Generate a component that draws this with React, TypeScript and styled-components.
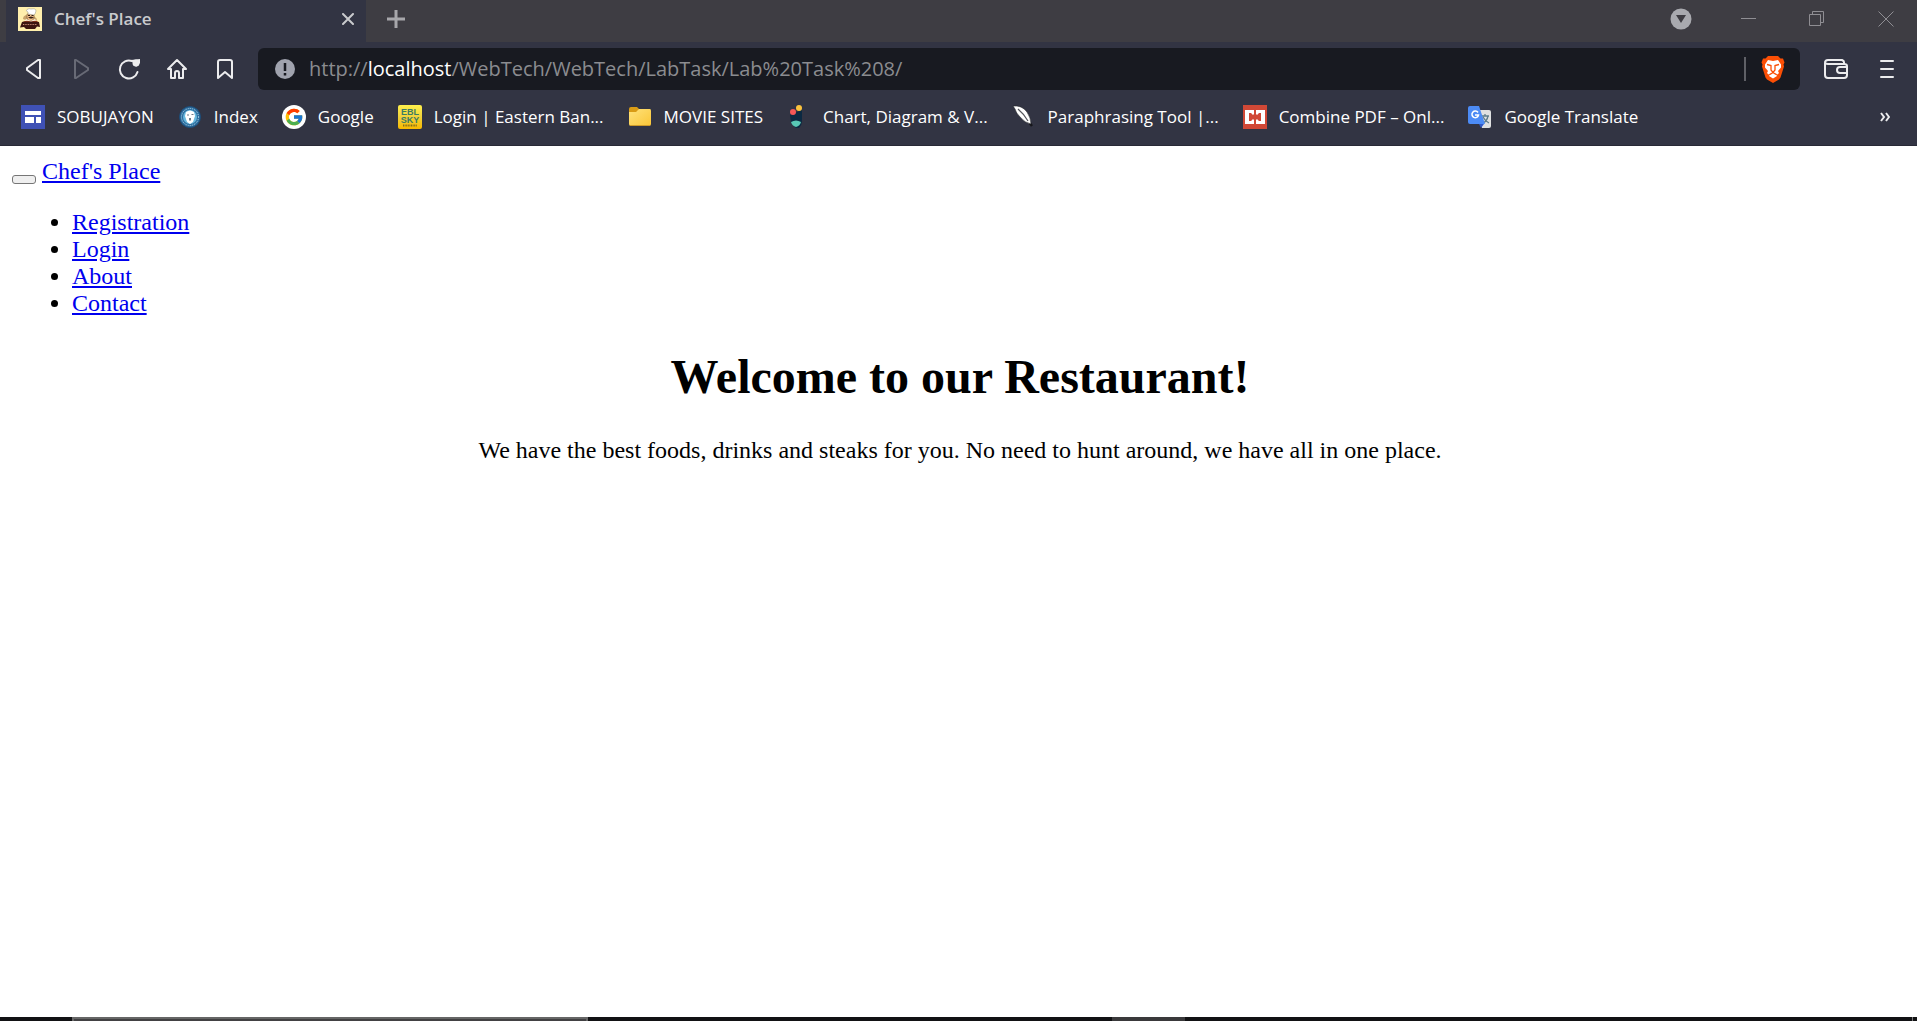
import React, { useState } from "react";
import styled, { createGlobalStyle } from "styled-components";
import { FcGoogle } from "react-icons/fc";

const ui = `"Open Sans", "Noto Sans", sans-serif`;

const GlobalStyle = createGlobalStyle`
  *, *::before, *::after { box-sizing: border-box; }
  body { margin: 0; background: #fff; }
`;

const Window = styled.div`
  display: flex;
  flex-direction: column;
  min-height: 100vh;
`;

const Chrome = styled.header`
  background: #323443;
  border-bottom: 1px solid #282936;
  font-family: ${ui};
  color: #fff;
`;

const TabStrip = styled.div`
  display: flex;
  height: 42px;
  padding-left: 6px;
  background: #3e3d43;
`;

const Tab = styled.div`
  display: flex;
  align-items: center;
  gap: 12px;
  width: 360px;
  padding: 0 9px 4px 12px;
  background: #323443;
  color: #c9cacd;
`;

const TabTitle = styled.span`
  flex: 1;
  font-weight: 600;
  font-size: 17px;
  line-height: 24px;
`;

const IconButton = styled.button<{ $w: number; $h?: number }>`
  display: flex;
  align-items: center;
  justify-content: center;
  flex: none;
  width: ${(p) => p.$w}px;
  height: ${(p) => p.$h ?? 36}px;
  padding: 0;
  border: 0;
  background: none;
  color: #ececee;

  &:disabled { color: #686a76; }
`;

const CloseTab = styled(IconButton)`
  color: #c9cacd;
`;

const NewTab = styled(IconButton)`
  margin-left: 6px;
  color: #a7a7ab;
`;

const WindowControls = styled.div`
  display: flex;
  margin-left: auto;

  & > button { color: #8f8e93; }
  & > button:last-child { padding-left: 3px; }
`;

const Toolbar = styled.div`
  display: flex;
  align-items: center;
  height: 54px;
  padding: 0 3px 0 9px;
`;

const AddressBar = styled.form`
  display: flex;
  align-items: center;
  flex: 1;
  min-width: 0;
  height: 42px;
  margin: 0 12px 0 9px;
  padding: 0 15px 0 17px;
  border-radius: 6px;
  background: #181a21;
  font-size: 20px;
  line-height: 28px;
  color: #8b8c90;
`;

const Origin = styled.label`
  margin-left: 14px;
`;

const Host = styled.span`
  color: #fff;
`;

const PathInput = styled.input`
  flex: 1;
  min-width: 0;
  padding: 0;
  border: 0;
  outline: 0;
  background: none;
  font: inherit;
  color: inherit;
`;

const Divider = styled.span`
  width: 2px;
  height: 24px;
  margin-right: 15px;
  background: #5f6066;
`;

const BookmarkBar = styled.nav`
  display: flex;
  align-items: center;
  gap: 24px;
  height: 49px;
  padding: 0 5px 8px 21px;
`;

const Bookmark = styled.a`
  display: flex;
  align-items: center;
  gap: 12px;
  font-size: 17px;
  line-height: 24px;
  white-space: nowrap;
  color: #fff;
  text-decoration: none;
`;

const MoreBookmarks = styled(IconButton)`
  margin-left: auto;
`;

const Page = styled.main`
  flex: 1;
  padding: 12px 9px 12px 12px;
  font-family: "Liberation Serif", serif;
  font-size: 24px;
  line-height: 27px;
  color: #000;
`;

const SiteNav = styled.nav`
  a { color: #0000ee; }
`;

const Brand = styled.div`
  display: flex;
  align-items: flex-end;
  gap: 6px;
`;

const Toggler = styled.button`
  width: 24px;
  height: 9px;
  margin-bottom: 1px;
  padding: 0;
  border: 1px solid #767676;
  border-radius: 3px;
  background: #efefef;
`;

const Menu = styled.ul`
  margin: 24px 0 0;
  padding-left: 60px;
`;

const Hero = styled.section`
  text-align: center;
`;

const Title = styled.h1`
  margin: 32px 0;
  font-size: 48px;
  line-height: 56px;
`;

const Lead = styled.p`
  margin: 0;
`;

const Taskbar = styled.footer`
  display: flex;
  height: 4px;
  padding: 0 4px 0 72px;
  background: #121214;
`;

const TaskSearch = styled.div`
  width: 516px;
  border: 2px solid #666;
  border-bottom: 0;
  background: #424143;
`;

const ActiveTask = styled.div`
  width: 73px;
  margin-left: 524px;
  background: #3a393b;
`;

const DesktopEdge = styled.div`
  width: 1px;
  margin-left: auto;
  background: #777;
`;

const Svg = ({ size = 24, children }: { size?: number; children: React.ReactNode }) => (
  <svg width={size} height={size} viewBox={`0 0 ${size} ${size}`} fill="none" aria-hidden="true">
    {children}
  </svg>
);

const line = { stroke: "currentColor", strokeWidth: 2, strokeLinejoin: "round", strokeLinecap: "round" } as const;

const ChefIcon = () => (
  <Svg>
    <path fill="#ffefad" d="M0 0h24v24H0z" />
    <path fill="#c9a46c" d="M5 12q0-3 3-4l2 1v5zM16 9l3 3-1 3-3-2z" />
    <path fill="#f1c08c" stroke="#63401f" strokeWidth=".5" d="M9 7h7v4l-2 3h-3l-2-3z" />
    <path fill="#fff" stroke="#a5a18e" strokeWidth=".6" d="M10 7V5Q7 4 9 2.500q2-1.500 4-.5 5-1 5 2l-1 3-1 1z" />
    <path fill="#352014" d="M10 8h2v1h-2zM13.500 8h2v1h-2zM10 10.500l3-1 3 1-2 1h-2z" />
    <path fill="#fff8e4" d="m8 12 5 2 4-2 2 3H6z" />
    <path fill="#b84a22" d="M5 15q3-2 6-1l2 1 2-1q4-1 5 1v1H4z" />
    <path fill="#3c1512" d="m4 15 2-.5h12l3 .5 1 5-3-.5L17 22H8l-2-2-4 .5z" />
    <path stroke="#c98d78" strokeWidth="1" strokeDasharray="1 .7" d="M5 17.500h14" />
  </Svg>
);

const SitesIcon = () => (
  <Svg>
    <path fill="#3f51b5" d="M0 0h24v24H0z" />
    <path fill="#fff" d="M4 6h16v4H4zM4 12h9v6H4zM15 12h5v6h-5z" />
  </Svg>
);

const IndexIcon = () => (
  <Svg>
    <circle cx="12" cy="12" r="10.500" fill="#2d6e9f" stroke="#1c4c78" />
    <circle cx="12" cy="12" r="8.500" stroke="#b5d8ea" strokeDasharray="1 1" />
    <circle cx="12" cy="12" r="7" fill="#68b8dd" />
    <path fill="#fff" d="M8 7q4-3 8 0l1 4-2 6-3 2-3-2-2-6z" />
    <path fill="#6f7b86" d="M9 9.500h2v1H9zM13.500 9h2v1h-2zM11 13h2v2.500h-2z" />
  </Svg>
);

const GoogleIcon = () => (
  <Svg>
    <circle cx="12" cy="12" r="12" fill="#fff" />
    <FcGoogle x="2" y="2" size={20} />
  </Svg>
);

const BankIcon = () => (
  <Svg>
    <defs>
      <linearGradient id="gold" x2="0" y2="1">
        <stop stopColor="#fff04c" />
        <stop offset=".5" stopColor="#f0d13b" />
        <stop offset="1" stopColor="#f8b900" />
      </linearGradient>
    </defs>
    <rect width="24" height="24" rx="2" fill="url(#gold)" />
    <g fill="#3c7b63" fontFamily="Liberation Sans, sans-serif" fontWeight="700" fontSize="9" textAnchor="middle">
      <text x="12" y="10">EBL</text>
      <text x="12" y="18">SKY</text>
    </g>
    <path stroke="#876e18" strokeWidth="2" strokeDasharray="1 .6" d="M5 20.500h14" />
  </Svg>
);

const FolderIcon = () => (
  <Svg>
    <defs>
      <linearGradient id="folder" x2="1" y2="1">
        <stop stopColor="#ffe27c" />
        <stop offset="1" stopColor="#fac637" />
      </linearGradient>
    </defs>
    <path fill="#d99b15" d="M1 4q0-2 2-2h6l2 2v4H1z" />
    <path fill="url(#folder)" d="M1 7h7l3-3h11q1 0 1 2v13q0 2-2 2H3q-2 0-2-2z" />
    <path stroke="#ce9a29" d="M2 20.500h20" />
  </Svg>
);

const ChartIcon = () => (
  <Svg>
    <path fill="#0b2942" d="M3 10 15 5v11q0 4-3 7H9q-4-3-5-6z" />
    <circle cx="12" cy="3" r="3" fill="#fcc33d" />
    <circle cx="6" cy="7" r="3" fill="#f25757" />
    <path fill="#59c8b5" d="M4 17q5-3 10 0-1 4-5 5-4-1-5-5z" />
  </Svg>
);

const QuillIcon = () => (
  <Svg>
    <path stroke="#16171b" strokeWidth="2.500" d="m16 16 4 5" />
    <path fill="#fff" stroke="#202126" strokeWidth=".6" d="M1 1q9-1 14 6 4 6 4 12-6-1-11-7-4-4-5-8z" />
    <path stroke="#55565c" strokeWidth="1.200" d="M6 4q6 5 10 12" />
  </Svg>
);

const PdfIcon = () => (
  <Svg>
    <path fill="#d14836" d="M0 0h24v24H0z" />
    <path fill="#fff" d="M2 5h9v4l-1 1v4l1 1v4H2zM13 5h9v14h-9v-4l1-1v-4l-1-1z" />
    <path fill="#d14836" d="M6 8h2l3 3h2l3-3h2v8h-2l-3-3h-2l-3 3H6z" />
  </Svg>
);

const TranslateIcon = () => (
  <Svg>
    <path fill="#dfe0e1" d="M10 5h11q2 0 2 2v14q0 2-2 2h-7z" />
    <path fill="#3158c6" d="m11 19 5 0-3 4z" />
    <path stroke="#5d7c8b" strokeWidth="1.300" d="M14 11h7M17 9v2M20 11q-1 5-5 7M15 12q2 4 6 6" />
    <path fill="#4c8bf5" d="M2 1h9l6 18H2q-2 0-2-2V3q0-2 2-2z" />
    <path stroke="#fff" strokeWidth="1.500" d="M10 7.500A3.300 3.300 0 1 0 10.500 10H7" />
  </Svg>
);

const LionIcon = () => (
  <svg width="24" height="28" viewBox="0 0 24 28" aria-hidden="true">
    <path fill="#fb4f05" d="M7 1h10l2.500 2.500L22 3.500l1.500 4-1 2 .5 2-3.500 11-1.500 2L12 28l-6-3.500-1.500-2L1 11.500l.5-2-1-2 1.500-4h2.500z" />
    <path fill="#fff" d="M7 5l5 1 5-1 3 4.500v3l-3 3.500 1 2-1.500 1.500L14 18l2 3-4 2.500L8 21l2-3-2.500 1.500L6 18l1-2-3-3.500v-3z" />
    <path fill="none" stroke="#fb4f05" strokeWidth="1.300" d="M6 9.500l4 1V15l2 2.500 2-2.500v-4.500l4-1M9 19.500l3-2 3 2" />
  </svg>
);

const bookmarks = [
  { label: "SOBUJAYON", Icon: SitesIcon },
  { label: "Index", Icon: IndexIcon },
  { label: "Google", Icon: GoogleIcon },
  { label: "Login | Eastern Ban...", Icon: BankIcon },
  { label: "MOVIE SITES", Icon: FolderIcon },
  { label: "Chart, Diagram & V...", Icon: ChartIcon },
  { label: "Paraphrasing Tool |...", Icon: QuillIcon },
  { label: "Combine PDF – Onl...", Icon: PdfIcon },
  { label: "Google Translate", Icon: TranslateIcon },
];

const menu = ["Registration", "Login", "About", "Contact"];

export default function App() {
  const [path, setPath] = useState("/WebTech/WebTech/LabTask/Lab%20Task%208/");

  return (
    <Window>
      <GlobalStyle />
      <Chrome>
        <TabStrip>
          <Tab>
            <ChefIcon />
            <TabTitle>Chef's Place</TabTitle>
            <CloseTab $w={18} $h={24} aria-label="Close tab">
              <svg width="12" height="12" fill="none"><path {...line} d="m1 1 10 10M11 1 1 11" /></svg>
            </CloseTab>
          </Tab>
          <NewTab $w={48} $h={38} aria-label="New tab">
            <svg width="18" height="18" fill="none"><path {...line} strokeWidth={3} strokeLinecap="butt" d="M9 0v18M0 9h18" /></svg>
          </NewTab>
          <WindowControls>
            <IconButton $w={68} $h={38} aria-label="Search tabs">
              <svg width="22" height="22"><circle cx="11" cy="11" r="10.500" fill="#a9aaaf" /><path fill="#3e3d43" d="M6 7h10l-5 8z" /></svg>
            </IconButton>
            <IconButton $w={68} $h={38} aria-label="Minimize">
              <svg width="16" height="16"><path stroke="currentColor" d="M0 7.500h15" /></svg>
            </IconButton>
            <IconButton $w={68} $h={38} aria-label="Restore">
              <svg width="16" height="16" fill="none"><path stroke="currentColor" d="M.5 3.500h11v11H.5zM3.500 3V.5h11v11H12" /></svg>
            </IconButton>
            <IconButton $w={66} $h={38} aria-label="Close">
              <svg width="16" height="16"><path stroke="currentColor" d="m.5.5 15 15M15.500.5l-15 15" /></svg>
            </IconButton>
          </WindowControls>
        </TabStrip>

        <Toolbar>
          <IconButton $w={48} aria-label="Back"><Svg><path {...line} d="M19 3v18h-2L6 13v-2L17 3z" /></Svg></IconButton>
          <IconButton $w={48} aria-label="Forward" disabled><Svg><path {...line} d="M6 3v18h1l12-8v-2L7 3z" /></Svg></IconButton>
          <IconButton $w={48} aria-label="Reload">
            <Svg><path {...line} d="M15 4A9 9 0 1 0 20.500 15" /><circle cx="19" cy="6" r="3.500" fill="currentColor" /><path fill="currentColor" d="M14 3l9-1v4l-4 4z" /></Svg>
          </IconButton>
          <IconButton $w={48} aria-label="Home">
            <Svg><path {...line} d="m3 12 9-9 9 9h-3v9h-4v-5q0-2-2-2t-2 2v5H6v-9z" /></Svg>
          </IconButton>
          <IconButton $w={48} aria-label="Bookmark this page"><Svg><path {...line} d="M5 5q0-2 2-2h10q2 0 2 2v16l-7-6-7 6z" /></Svg></IconButton>
          <AddressBar onSubmit={(e) => e.preventDefault()}>
            <svg width="20" height="20" aria-hidden="true"><circle cx="10" cy="10" r="10" fill="#a0a3ae" /><path stroke="#181a21" strokeWidth="2.500" d="M10 4v8M10 14v2.500" /></svg>
            <Origin htmlFor="address">http://<Host>localhost</Host></Origin>
            <PathInput id="address" value={path} spellCheck={false} onChange={(e) => setPath(e.target.value)} />
            <Divider />
            <IconButton $w={24} type="button" aria-label="Brave Shields">
              <LionIcon />
            </IconButton>
          </AddressBar>
          <IconButton $w={48} aria-label="Wallet">
            <Svg><path {...line} d="M20 7V5q0-1-2-2H4Q1 3 1 6v12q0 3 3 3h16q3 0 3-3V9q0-2-3-2H4Q1 7 1 5" /><path {...line} d="M23 10h-7q-3 0-3 3t3 3h7z" /></Svg>
          </IconButton>
          <IconButton $w={54} aria-label="Menu"><Svg><path {...line} d="M6 4h12M6 12h12M6 20h12" /></Svg></IconButton>
        </Toolbar>

        <BookmarkBar aria-label="Bookmarks">
          {bookmarks.map(({ label, Icon }) => (
            <Bookmark href="#" key={label}><Icon />{label}</Bookmark>
          ))}
          <MoreBookmarks $w={54} aria-label="More bookmarks">
            <svg width="10" height="10" fill="none"><path stroke="currentColor" strokeWidth="2" d="m1 1 3 4-3 4M6 1l3 4-3 4" /></svg>
          </MoreBookmarks>
        </BookmarkBar>
      </Chrome>

      <Page>
        <SiteNav aria-label="Site">
          <Brand>
            <Toggler type="button" aria-label="Toggle navigation" />
            <a href="#">Chef's Place</a>
          </Brand>
          <Menu>
            {menu.map((item) => (
              <li key={item}><a href="#">{item}</a></li>
            ))}
          </Menu>
        </SiteNav>
        <Hero>
          <Title>Welcome to our Restaurant!</Title>
          <Lead>We have the best foods, drinks and steaks for you. No need to hunt around, we have all in one place.</Lead>
        </Hero>
      </Page>

      <Taskbar>
        <TaskSearch />
        <ActiveTask />
        <DesktopEdge />
      </Taskbar>
    </Window>
  );
}
